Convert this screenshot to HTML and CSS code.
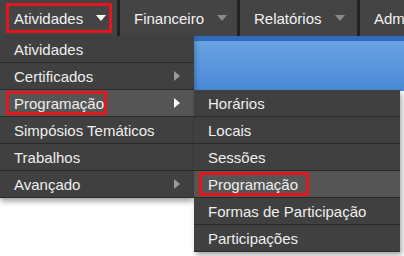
FILE: index.html
```html
<!DOCTYPE html>
<html lang="pt">
<head>
  <meta charset="UTF-8">
  <title>Atividades</title>
  <link rel="stylesheet" href="styles.css">
</head>
<body>

<nav class="topbar">
  <ul class="main-menu">
    <li class="main-item">
      <a class="main-link"><span class="mark mark-top">Atividades<span class="caret caret-open"></span></span></a>
      <ul class="dropdown">
        <li><a class="drop-link">Atividades</a></li>
        <li><a class="drop-link">Certificados<span class="arrow"></span></a></li>
        <li class="has-sub">
          <a class="drop-link active"><span class="mark">Programação</span><span class="arrow arrow-open"></span></a>
          <ul class="dropdown submenu">
            <li><a class="drop-link">Horários</a></li>
            <li><a class="drop-link">Locais</a></li>
            <li><a class="drop-link">Sessões</a></li>
            <li><a class="drop-link active"><span class="mark mark-sub">Programação</span></a></li>
            <li><a class="drop-link">Formas de Participação</a></li>
            <li><a class="drop-link">Participações</a></li>
          </ul>
        </li>
        <li><a class="drop-link">Simpósios Temáticos</a></li>
        <li><a class="drop-link">Trabalhos</a></li>
        <li><a class="drop-link">Avançado<span class="arrow"></span></a></li>
      </ul>
    </li>
    <li class="main-item"><a class="main-link">Financeiro<span class="caret"></span></a></li>
    <li class="main-item"><a class="main-link">Relatórios<span class="caret"></span></a></li>
    <li class="main-item"><a class="main-link">Administração<span class="caret"></span></a></li>
  </ul>
</nav>

<div class="banner"></div>

</body>
</html>
```

FILE: styles.css
```css
/* Page */
html {
  overflow: hidden;
}

body {
  margin: 0;
  height: 100vh;
  font-family: "Liberation Sans", Arial, sans-serif;
  font-size: 15px;
  background-color: #fff;
}

ul {
  list-style: none;
  margin: 0;
  padding: 0;
}

/* Top menu bar */
.topbar {
  height: 36px;
  background-color: #444;
}

.main-menu {
  display: flex;
  height: 36px;
}

.main-item {
  position: relative;
  flex-shrink: 0;
}

.main-link {
  display: flex;
  align-items: center;
  box-sizing: border-box;
  width: 120px;
  height: 36px;
  padding-left: 14px;
  border-right: 3px solid #222;
  color: #f2f2f2;
  white-space: nowrap;
}

.caret {
  width: 0;
  height: 0;
  margin-left: 13px;
  border-top: 6px solid #8a8a8a;
  border-left: 5px solid transparent;
  border-right: 5px solid transparent;
}

.caret-open {
  border-top-color: #fff;
}

/* Red highlight boxes */
.mark {
  display: inline-flex;
  align-items: center;
  box-sizing: border-box;
  height: 24px;
  margin-left: -8px;
  padding: 0 0 0 5px;
  border: 3px solid #e3161f;
}

.mark-top {
  height: 30px;
  padding-right: 3px;
}

.mark-sub {
  margin-left: -9px;
  padding: 0 8px 0 6px;
}

/* Dropdown menus */
.dropdown {
  position: absolute;
  top: 36px;
  left: 0;
  z-index: 2;
  width: 194px;
  background-color: #404040;
  box-shadow: 0 3px 6px rgba(0, 0, 0, 0.4);
}

.has-sub {
  position: relative;
}

.submenu {
  top: 0;
  left: 194px;
  width: 206px;
  box-shadow: 2px 3px 5px rgba(0, 0, 0, 0.35);
}

.drop-link {
  display: flex;
  align-items: center;
  justify-content: space-between;
  height: 26px;
  padding: 0 14px;
  border-bottom: 1px solid #2b2b2b;
  color: #eee;
  white-space: nowrap;
}

.drop-link.active {
  background-color: #555;
}

.arrow {
  width: 0;
  height: 0;
  border-left: 6px solid #9a9a9a;
  border-top: 5px solid transparent;
  border-bottom: 5px solid transparent;
}

.arrow-open {
  border-left-color: #fff;
}

/* Blue page header */
.banner {
  height: 50px;
  border-top: 5px solid #2f6cbc;
  background: linear-gradient(#6aa3e3, #4a88d7);
}
```
